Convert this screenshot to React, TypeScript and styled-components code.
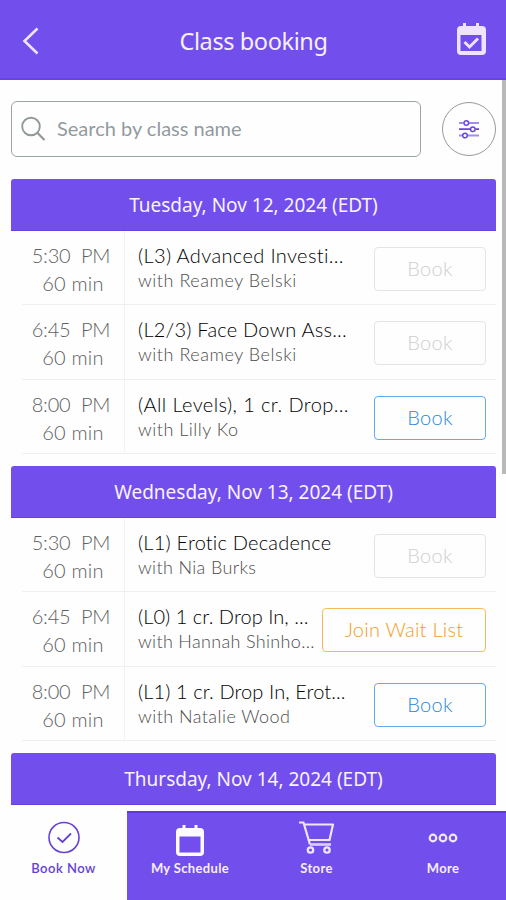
import React from 'react';
import styled, { createGlobalStyle } from 'styled-components';

const purple = '#724eec';

const GlobalStyle = createGlobalStyle`
  *, *::before, *::after { box-sizing: border-box; }
  body { margin: 0; background: #fefefe; overflow: hidden; }
  button { font: inherit; cursor: pointer; }
`;

const Screen = styled.div`
  width: 506px;
  height: 900px;
  display: flex;
  flex-direction: column;
  overflow: hidden;
  background: #fefefe;
  font-family: Lato, 'Open Sans', sans-serif;
`;

const Header = styled.header`
  flex: none;
  height: 80px;
  display: grid;
  grid-template-columns: 60px 1fr 60px;
  align-items: center;
  background: ${purple};
  border-bottom: 2px solid #6a43e6;
`;

const HeaderButton = styled.button<{ $end?: boolean }>`
  display: flex;
  justify-content: ${(p) => (p.$end ? 'flex-end' : 'flex-start')};
  border: 0;
  padding: ${(p) => (p.$end ? '0 20px 0 0' : '3px 0 0 22px')};
  background: none;
  color: #eee4ff;
`;

const Title = styled.h1`
  margin: 4px 0 0 1px;
  text-align: center;
  font: 400 23.5px/32px 'Noto Sans', 'Open Sans', sans-serif;
  letter-spacing: -0.4px;
  color: #f6f0ff;
`;

const Body = styled.div`
  flex: none;
  height: 731px;
  display: flex;
  justify-content: space-between;
`;

const Main = styled.main`
  width: 485px;
  margin-left: 11px;
  height: 725px;
  overflow: hidden;
`;

const ScrollThumb = styled.div`
  width: 4px;
  height: 394px;
  background: #b9b9b9;
`;

const SearchRow = styled.div`
  display: flex;
  justify-content: space-between;
  align-items: center;
  margin: 21px 0 22px;
  height: 56px;
`;

const SearchBox = styled.label`
  width: 410px;
  height: 56px;
  display: flex;
  align-items: center;
  gap: 11px;
  padding-left: 9px;
  border: 1px solid #9ba4a4;
  border-radius: 6px;
  color: #929999;
`;

const SearchText = styled.span`
  margin-top: -2px;
  font-size: 20px;
  line-height: 26px;
  letter-spacing: 0;
  color: #939a9e;
`;

const FilterButton = styled.button`
  width: 54px;
  height: 54px;
  display: grid;
  place-items: center;
  padding: 0;
  border: 1px solid #999;
  border-radius: 50%;
  background: none;
`;

const Day = styled.section`
  height: 287px;
`;

const DayTitle = styled.h2`
  margin: 0;
  height: 52px;
  display: flex;
  align-items: center;
  justify-content: center;
  border-radius: 3px 3px 0 0;
  background: ${purple};
  border-bottom: 1px solid #6840e4;
  font: 400 19px/26px 'Noto Sans', 'Open Sans', sans-serif;
  color: #f8f3ff;
`;

const ClassRow = styled.div`
  height: 74.4px;
  display: flex;
  margin-left: 11px;
  border-bottom: 1px solid #eef0f0;
`;

const TimeCell = styled.div`
  width: 103px;
  padding: 10px 4px 0 0;
  border-right: 1px solid #f0f3f3;
  text-align: center;
  font-size: 20px;
  line-height: 28px;
  font-weight: 300;
  color: #606060;
`;

const Time = styled.div`
  white-space: pre;
  letter-spacing: -0.2px;
`;

const Duration = styled.div`
  padding-left: 4px;
  letter-spacing: 0.2px;
`;

const ClassInfo = styled.div`
  flex: 1;
  min-width: 0;
  padding: 11px 0 0 13px;
  white-space: nowrap;
`;

const ClassName = styled.div<{ $spacing: number }>`
  font-size: 20px;
  line-height: 26px;
  font-weight: 300;
  letter-spacing: ${(p) => p.$spacing}px;
  color: #000;
`;

const Teacher = styled.div<{ $spacing: number }>`
  font-size: 18px;
  line-height: 24px;
  font-weight: 300;
  letter-spacing: ${(p) => p.$spacing}px;
  color: #4c4c4c;
`;

type Tone = 'off' | 'book' | 'wait';
const tones: Record<Tone, { text: string; line: string }> = {
  off: { text: '#cfcfcf', line: '#e4e4e4' },
  book: { text: '#1e88e2', line: '#62aaf0' },
  wait: { text: '#f39c1c', line: '#f6b95c' },
};

const ActionButton = styled.button<{ $tone: Tone }>`
  flex: none;
  width: ${(p) => (p.$tone === 'wait' ? 164 : 112)}px;
  height: 44px;
  margin: 16px 10px 0 0;
  padding: 0 0 2px;
  border: 1.5px solid ${(p) => tones[p.$tone].line};
  border-radius: 4px;
  background: transparent;
  font-size: 20px;
  line-height: 26px;
  font-weight: 300;
  letter-spacing: ${(p) => (p.$tone === 'wait' ? 0.25 : 0.3)}px;
  color: ${(p) => tones[p.$tone].text};
`;

const TabBar = styled.nav`
  flex: none;
  height: 89px;
  display: grid;
  grid-template-columns: 127px 126px 127px 126px;
`;

const Tab = styled.a<{ $active?: boolean }>`
  display: flex;
  flex-direction: column;
  align-items: center;
  background: ${(p) => (p.$active ? '#fefefe' : purple)};
  border-top: ${(p) => (p.$active ? '0' : '2px solid #6238dc')};
  padding-top: ${(p) => (p.$active ? 10 : 7)}px;
  color: ${(p) => (p.$active ? '#6541d8' : '#f6efff')};
`;

const TabIcon = styled.span`
  height: 38px;
  display: flex;
  align-items: flex-start;
`;

const TabLabel = styled.span<{ $bold?: boolean }>`
  margin-top: ${(p) => (p.$bold ? 1 : 0)}px;
  font-size: 13px;
  line-height: 18px;
  font-weight: ${(p) => (p.$bold ? 700 : 600)};
  letter-spacing: ${(p) => (p.$bold ? 0.35 : 0.5)}px;
`;

const BackIcon = () => (
  <svg width="20" height="30" viewBox="0 0 20 30" fill="none" stroke="currentColor" strokeWidth="2.6">
    <path d="M15.5 2.5 2.5 15l13 12.5" />
  </svg>
);

const CalendarCheck = () => (
  <svg width="30" height="34" viewBox="0 0 30 34" fill="none">
    <path fill="currentColor" fillRule="evenodd" d="M7 1h3v3h10V1h3v3h3a4 4 0 0 1 4 4v21a4 4 0 0 1-4 4H5a4 4 0 0 1-4-4V8a4 4 0 0 1 4-4h2zM4.500 13v16h21V13z" />
    <path d="m8.500 20 5 5 8.500-8.500" stroke="currentColor" strokeWidth="3" />
  </svg>
);

const SearchIcon = () => (
  <svg width="25" height="26" viewBox="0 0 25 26" fill="none" stroke="currentColor" strokeWidth="1.9">
    <circle cx="10" cy="10.500" r="8.800" />
    <path d="m16.300 16.800 7.200 7.200" strokeWidth="2.300" />
  </svg>
);

const FilterIcon = () => (
  <svg width="20" height="20" viewBox="0 0 20 20" fill="none" stroke="#6947df" strokeWidth="1.500">
    <path d="M0 4h4.500M10 4h10M0 16.500h3.500M9 16.500h11" stroke="#a28df1" strokeWidth="2" />
    <path d="M0 10.200h11M16.500 10.200H20" strokeWidth="1.800" />
    <circle cx="7.300" cy="4" r="2.300" />
    <circle cx="13.800" cy="10.200" r="2.300" />
    <circle cx="6" cy="16.500" r="2.300" />
  </svg>
);

const BookIcon = () => (
  <svg width="32" height="33" viewBox="0 0 32 33" fill="none" stroke="currentColor">
    <circle cx="16" cy="16.500" r="15" strokeWidth="1.600" />
    <path d="m9.500 16.500 5 4.500 8.500-8.500" strokeWidth="1.800" />
  </svg>
);

const ScheduleIcon = () => (
  <svg width="30" height="37" viewBox="0 0 30 37">
    <path fill="#fdfaff" fillRule="evenodd" d="M7.500 5h3v3h9V5h3v3H25a4 4 0 0 1 4 4v20a4 4 0 0 1-4 4H5a4 4 0 0 1-4-4V12a4 4 0 0 1 4-4h2.500zM4.500 16.500V32.500h21v-16z" />
  </svg>
);

const StoreIcon = () => (
  <svg width="36" height="34" viewBox="0 0 36 34" fill="none" stroke="#efe5ff" strokeWidth="2.200" strokeLinejoin="round">
    <path d="M0 2.500h4.500l6.500 22M6 4.500h28l-3.500 15.500h-20.500" />
    <path d="M11 24.500h21" strokeWidth="2.700" stroke="#d9ccfb" />
    <circle cx="11.500" cy="30" r="2.700" strokeWidth="2.300" />
    <circle cx="28" cy="30" r="2.700" strokeWidth="2.300" />
  </svg>
);

const MoreIcon = () => (
  <svg width="30" height="34" viewBox="0 0 30 34" fill="none" stroke="#f2e9ff" strokeWidth="2.200">
    <circle cx="5" cy="18" r="3.300" />
    <circle cx="15" cy="18" r="3.300" />
    <circle cx="25" cy="18" r="3.300" />
  </svg>
);

interface Session {
  time: string;
  name: string;
  nameSpacing: number;
  teacher: string;
  teacherSpacing: number;
  tone: Tone;
}

const days: { title: string; sessions: Session[] }[] = [
  {
    title: 'Tuesday, Nov 12, 2024 (EDT)',
    sessions: [
      { time: '5:30', name: '(L3) Advanced Investi...', nameSpacing: 0.36, teacher: 'with Reamey Belski', teacherSpacing: 0.54, tone: 'off' },
      { time: '6:45', name: '(L2/3) Face Down Ass...', nameSpacing: 0.23, teacher: 'with Reamey Belski', teacherSpacing: 0.54, tone: 'off' },
      { time: '8:00', name: '(All Levels), 1 cr. Drop...', nameSpacing: 0.4, teacher: 'with Lilly Ko', teacherSpacing: 0.5, tone: 'book' },
    ],
  },
  {
    title: 'Wednesday, Nov 13, 2024 (EDT)',
    sessions: [
      { time: '5:30', name: '(L1) Erotic Decadence', nameSpacing: 0.2, teacher: 'with Nia Burks', teacherSpacing: 0.35, tone: 'off' },
      { time: '6:45', name: '(L0) 1 cr. Drop In, ...', nameSpacing: 0.05, teacher: 'with Hannah Shinho...', teacherSpacing: 0.33, tone: 'wait' },
      { time: '8:00', name: '(L1) 1 cr. Drop In, Erot...', nameSpacing: 0.1, teacher: 'with Natalie Wood', teacherSpacing: 0.45, tone: 'book' },
    ],
  },
  { title: 'Thursday, Nov 14, 2024 (EDT)', sessions: [] },
];

export default function App() {
  return (
    <Screen>
      <GlobalStyle />
      <Header>
        <HeaderButton aria-label="Back"><BackIcon /></HeaderButton>
        <Title>Class booking</Title>
        <HeaderButton $end aria-label="Calendar"><CalendarCheck /></HeaderButton>
      </Header>
      <Body>
        <Main>
          <SearchRow>
            <SearchBox>
              <SearchIcon />
              <SearchText>Search by class name</SearchText>
            </SearchBox>
            <FilterButton aria-label="Filters"><FilterIcon /></FilterButton>
          </SearchRow>
          {days.map((day) => (
            <Day key={day.title}>
              <DayTitle>{day.title}</DayTitle>
              {day.sessions.map((s) => (
                <ClassRow key={s.time}>
                  <TimeCell>
                    <Time>{s.time + '  PM'}</Time>
                    <Duration>60 min</Duration>
                  </TimeCell>
                  <ClassInfo>
                    <ClassName $spacing={s.nameSpacing}>{s.name}</ClassName>
                    <Teacher $spacing={s.teacherSpacing}>{s.teacher}</Teacher>
                  </ClassInfo>
                  <ActionButton $tone={s.tone}>{s.tone === 'wait' ? 'Join Wait List' : 'Book'}</ActionButton>
                </ClassRow>
              ))}
            </Day>
          ))}
        </Main>
        <ScrollThumb />
      </Body>
      <TabBar>
        <Tab $active>
          <TabIcon><BookIcon /></TabIcon>
          <TabLabel>Book Now</TabLabel>
        </Tab>
        <Tab>
          <TabIcon><ScheduleIcon /></TabIcon>
          <TabLabel $bold>My Schedule</TabLabel>
        </Tab>
        <Tab>
          <TabIcon><StoreIcon /></TabIcon>
          <TabLabel $bold>Store</TabLabel>
        </Tab>
        <Tab>
          <TabIcon><MoreIcon /></TabIcon>
          <TabLabel $bold>More</TabLabel>
        </Tab>
      </TabBar>
    </Screen>
  );
}
